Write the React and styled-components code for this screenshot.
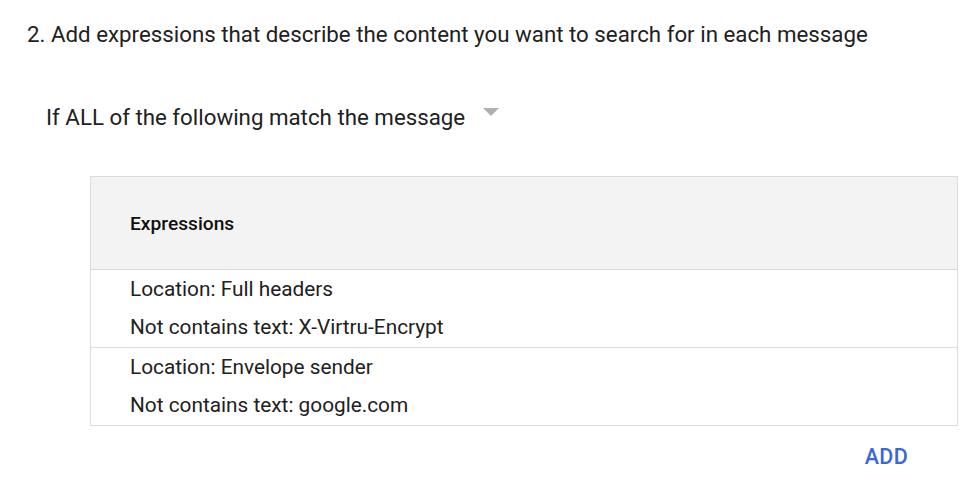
import React from "react";
import styled, { createGlobalStyle } from "styled-components";

const GlobalStyle = createGlobalStyle`
  html, body {
    margin: 0;
    padding: 0;
    background: #ffffff;
  }
  body {
    font-family: Roboto, "Liberation Sans", Arial, sans-serif;
    color: #212121;
  }
`;

const Page = styled.div`
  width: 980px;
  height: 490px;
  box-sizing: border-box;
  padding: 20px 23px 0 27px;
`;

const StepTitle = styled.h2`
  margin: 0;
  font-size: 22.3px;
  font-weight: 400;
  line-height: 28px;
  color: #212121;
`;

const MatchSelect = styled.div`
  display: flex;
  align-items: center;
  gap: 18px;
  margin: 55px 0 0 19px;
  font-size: 22.3px;
  line-height: 28px;
  color: #212121;
`;

const Caret = styled.span`
  width: 0;
  height: 0;
  border-left: 8px solid transparent;
  border-right: 8px solid transparent;
  border-top: 8px solid #b0b0b0;
  margin-top: -10px;
`;

const Table = styled.div`
  margin: 45px 0 0 63px;
  width: 868px;
  box-sizing: border-box;
  border: 1px solid #dcdcdc;
`;

const HeaderRow = styled.div`
  height: 92px;
  display: flex;
  align-items: center;
  padding-left: 39px;
  background: #f3f3f3;
  border-bottom: 1px solid #dcdcdc;
  font-size: 19.2px;
  font-weight: 500;
  color: #111;
`;

const Group = styled.div`
  display: flex;
  flex-direction: column;
  padding: 0 0 1px 39px;
  border-top: ${(p) => (p.$divided ? "1px solid #dcdcdc" : "none")};
`;

const Line = styled.div`
  height: 38px;
  line-height: 38px;
  font-size: 20.8px;
  color: #212121;
`;

const Actions = styled.div`
  display: flex;
  justify-content: flex-end;
  padding-right: 49px;
  margin-top: 18px;
`;

const AddButton = styled.button`
  border: none;
  background: none;
  padding: 0;
  font-family: inherit;
  font-size: 21.5px;
  font-weight: 500;
  color: #3b67d3;
  letter-spacing: 0.3px;
  cursor: pointer;
`;

const groups = [
  ["Location: Full headers", "Not contains text: X-Virtru-Encrypt"],
  ["Location: Envelope sender", "Not contains text: google.com"],
];

export default function App() {
  return (
    <Page>
      <GlobalStyle />
      <StepTitle>
        2. Add expressions that describe the content you want to search for in each message
      </StepTitle>
      <MatchSelect>
        If ALL of the following match the message
        <Caret />
      </MatchSelect>
      <Table>
        <HeaderRow>Expressions</HeaderRow>
        {groups.map((g, i) => (
          <Group key={i} $divided={i > 0}>
            {g.map((t) => (
              <Line key={t}>{t}</Line>
            ))}
          </Group>
        ))}
      </Table>
      <Actions>
        <AddButton>ADD</AddButton>
      </Actions>
    </Page>
  );
}
